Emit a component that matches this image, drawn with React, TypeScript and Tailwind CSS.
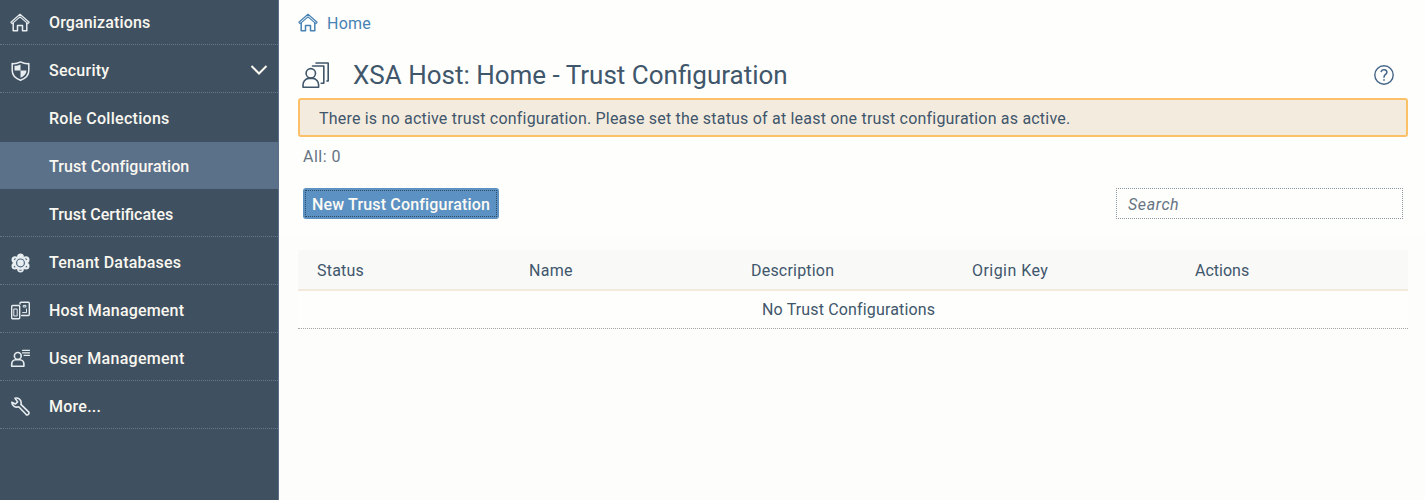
import type { ReactNode } from "react";

const svgProps = {
  fill: "none",
  stroke: "currentColor",
  strokeWidth: 1.5,
  strokeLinejoin: "round" as const,
  strokeLinecap: "round" as const,
};

function HomeIcon({ className }: { className?: string }) {
  return (
    <svg viewBox="0 0 20 20" className={className} {...svgProps}>
      <path d="M.9 9.300 10 1.300l9.100 8-1.200 1.300L10 3.900l-7.900 6.700z" strokeWidth="1.200" />
      <path d="M3.200 10v7.700h4.300v-5.300h5v5.300h4.300V10" />
    </svg>
  );
}

function ShieldIcon() {
  return (
    <svg viewBox="0 0 20 20" className="size-5" {...svgProps}>
      <path d="M2.200 2.600C5.500 3 8.200 2 10.500.9c2.200 1.100 5 2.100 8.300 1.700V9.500c0 4.500-3.400 8-8.300 9.700C5.600 17.500 2.200 14 2.200 9.500z" />
      <path d="M10.500 3.500v6h-6V4.800c2.400 0 4.200-.5 6-1.300zM10.500 9.500h6c0 3.200-2.400 5.700-6 7.300z" fill="currentColor" stroke="none" />
    </svg>
  );
}

function TenantIcon() {
  return (
    <svg viewBox="0 0 20 20" className="size-5">
      <g fill="currentColor">
        <circle cx="10.500" cy="3.800" r="3.400" />
        <circle cx="5" cy="6.700" r="3.500" />
        <circle cx="16" cy="6.700" r="3.500" />
        <circle cx="5" cy="13" r="3.500" />
        <circle cx="16" cy="13" r="3.500" />
        <circle cx="10.500" cy="16" r="3.400" />
      </g>
      <circle cx="10.500" cy="9.900" r="3.900" fill="currentColor" stroke="#4c6680" strokeWidth="1.200" />
      <path d="M9.300 17.200h2.400M4.100 7l1.400-1.600M15.500 5.400 16.900 7M4.100 13l1 1.400M16.900 13l-1 1.400" stroke="#4c6680" strokeWidth="1.100" />
    </svg>
  );
}

function HostIcon() {
  return (
    <svg viewBox="0 0 20 20" className="size-5" {...svgProps} strokeWidth={1.400}>
      <rect x="1.700" y="4.500" width="8" height="13.300" rx="1" />
      <path d="M10 3V2.200a1 1 0 0 1 1-1h7.300a1 1 0 0 1 1 1v11.300a1 1 0 0 1-1 1h-6.600" />
      <path d="M4.200 8h3v7h-3zM13.700 4.400h2.200v1.600h-2.200zM12.600 11.600h3.900V8" strokeWidth="1" />
    </svg>
  );
}

function UserIcon() {
  return (
    <svg viewBox="0 0 20 20" className="size-5" {...svgProps} strokeWidth={1.600}>
      <circle cx="7.800" cy="6.900" r="3.400" />
      <path d="M1.700 17.300V15c0-2.200 1.800-4.100 4-4.300h4.200c2.200.2 4 2.100 4 4.300v2.300z" />
      <path d="M12.500 1.300h7M12.500 3.800h7M14 6.300h5.500" strokeWidth="1.200" />
    </svg>
  );
}

function WrenchIcon() {
  return (
    <svg viewBox="0 0 20 20" className="size-5" {...svgProps} strokeWidth={1.600}>
      <path d="M5 1.200C7.900.3 11.200 2.500 11.200 5.700c0 .6-.1 1.200-.3 1.700l7.700 7.500c1.500 1.500-.9 4-2.600 2.400L8.700 9.700C5.500 11 2 8.900 1.800 5.200L5.400 7l2.200-2.100z" />
    </svg>
  );
}

function UserSettingsIcon() {
  return (
    <svg viewBox="0 0 28 28" className="h-7 w-7" {...svgProps} strokeWidth={1.600}>
      <circle cx="8.800" cy="12.300" r="4.700" />
      <path d="M1 26.300v-2.600c0-3.300 2.500-6 5.600-6.300H11c3.100.3 5.600 3 5.600 6.300v2.600z" />
      <path d="M10.500 5h11.300v17.300h-2.600M14 2h12.200v18h-1.300" />
    </svg>
  );
}

type Item = { label: string; icon?: ReactNode; tracking: string; kind?: "sub" | "active" | "open" };

const items: Item[] = [
  { label: "Security", icon: <ShieldIcon />, tracking: "tracking-[0.25px]", kind: "open" },
  { label: "Role Collections", tracking: "tracking-[0.29px]", kind: "sub" },
  { label: "Trust Configuration", tracking: "tracking-[0.08px]", kind: "active" },
  { label: "Trust Certificates", tracking: "tracking-[0px]" },
  { label: "Tenant Databases", icon: <TenantIcon />, tracking: "tracking-[0.2px]" },
  { label: "Host Management", icon: <HostIcon />, tracking: "tracking-[0.18px]" },
  { label: "User Management", icon: <UserIcon />, tracking: "tracking-[0.28px]" },
  { label: "More...", icon: <WrenchIcon />, tracking: "tracking-[0.25px]" },
];

function NavRow({ item }: { item: Item }) {
  let frame = "border-b border-dotted border-[#64798f] pt-[4px]";
  if (item.kind === "sub") frame = "pt-[3px]";
  if (item.kind === "active") frame = "border-t border-transparent bg-[#5b7089] bg-clip-padding pt-[2px]";
  return (
    <li className={`flex h-12 items-center px-[10px] ${frame}`}>
      <span className="flex w-[39px] shrink-0 text-[#e8edf0]">{item.icon}</span>
      <span className={`font-medium whitespace-nowrap text-[#faf7f0] ${item.tracking}`}>{item.label}</span>
      {item.kind === "open" && (
        <svg viewBox="0 0 18 12" className="mb-0.5 ml-auto h-3 w-[18px]" fill="none" stroke="#faf7f0" strokeWidth="2">
          <path d="m1.500 2 7.500 7.500L16.500 2" />
        </svg>
      )}
    </li>
  );
}

export default function App() {
  return (
    <div className="flex h-[500px] w-[1425px] overflow-hidden bg-[#fefefc] font-['Roboto',sans-serif] text-[16px] text-[#40566b]">
      <nav className="w-[279px] shrink-0 border-r border-[#5b7089] bg-[#3f5161]">
        <ul>
          <li className="flex h-[45px] items-center border-b border-dotted border-[#64798f] pt-px pl-[10px]">
            <span className="flex w-[39px] shrink-0 text-[#e8edf0]">
              <HomeIcon className="size-5" />
            </span>
            <span className="font-medium tracking-[0.14px] whitespace-nowrap text-[#faf7f0]">Organizations</span>
          </li>
          {items.map((item) => (
            <NavRow key={item.label} item={item} />
          ))}
        </ul>
      </nav>
      <main className="flex grow flex-col pt-3 pr-[17px] pl-[19px]">
        <div className="flex h-6 items-center text-[#4682b4]">
          <HomeIcon className="mb-0.5 size-5" />
          <a className="ml-[9px] tracking-[0.25px]">Home</a>
        </div>
        <header className="mt-4 flex h-[46px] items-center pr-[14px] pl-1">
          <UserSettingsIcon />
          <h1 className="ml-[23px] text-[26px] whitespace-nowrap">XSA Host: Home - Trust Configuration</h1>
          <svg viewBox="0 0 20 20" className="ml-auto size-5 text-[#466687]" {...svgProps}>
            <circle cx="10" cy="10" r="9.200" strokeWidth="1.400" />
            <path d="M7.200 6.500C8 4 12.900 4.100 12.900 7.200c0 2.300-2.900 2.200-2.900 5M10 14.800v.4" />
          </svg>
        </header>
        <div className="flex h-[39px] items-center rounded-[3px] border-2 border-[#fbc068] bg-[#f4ebdf] pt-[2px] pl-[19px]">
          <p className="tracking-[0.2px] whitespace-nowrap">
            There is no active trust configuration. Please set the status of at least one trust configuration as active.
          </p>
        </div>
        <div className="mt-2 ml-[5px] h-6 leading-6 text-[#667483]">
          <span className="tracking-[0.5px]">All: 0</span>
        </div>
        <div className="mt-[19px] flex justify-between pr-[5px] pl-[5px]">
          <button className="flex h-[31px] w-[196px] rounded-[3px] bg-[#5b92c3] p-[2px]">
            <span className="flex h-full w-full items-center justify-center border border-dotted border-[#34495d] pt-[2px] font-medium tracking-[0.17px] whitespace-nowrap text-[#fefaf4]">
              New Trust Configuration
            </span>
          </button>
          <div className="flex h-[31px] w-[287px] items-center border border-dotted border-[#8d98a3] pt-[2px] pl-[11px] text-[#667483] italic">
            <span className="tracking-[0.6px]">Search</span>
          </div>
        </div>
        <section className="-mr-[17px] -ml-[19px] mt-[15px] h-[266px] shrink-0 bg-[#fdfdfb] pt-4 pr-[17px] pl-[19px]">
          <div className="grid h-[41px] grid-cols-[212px_222px_221px_223px_1fr] items-center border-b-2 border-[#f3e9dd] bg-[#f9f9f8] pt-0.5 pl-[19px]">
            <span className="tracking-[0.2px]">Status</span>
            <span className="tracking-[0.3px]">Name</span>
            <span className="tracking-[0.2px]">Description</span>
            <span className="tracking-[0.45px]">Origin Key</span>
            <span>Actions</span>
          </div>
          <div className="flex h-[38px] items-center border-b border-dotted border-[#a3a8ab] bg-[#fefefc] pl-[464px]">
            <span className="tracking-[0.15px] whitespace-nowrap">No Trust Configurations</span>
          </div>
        </section>
      </main>
    </div>
  );
}
